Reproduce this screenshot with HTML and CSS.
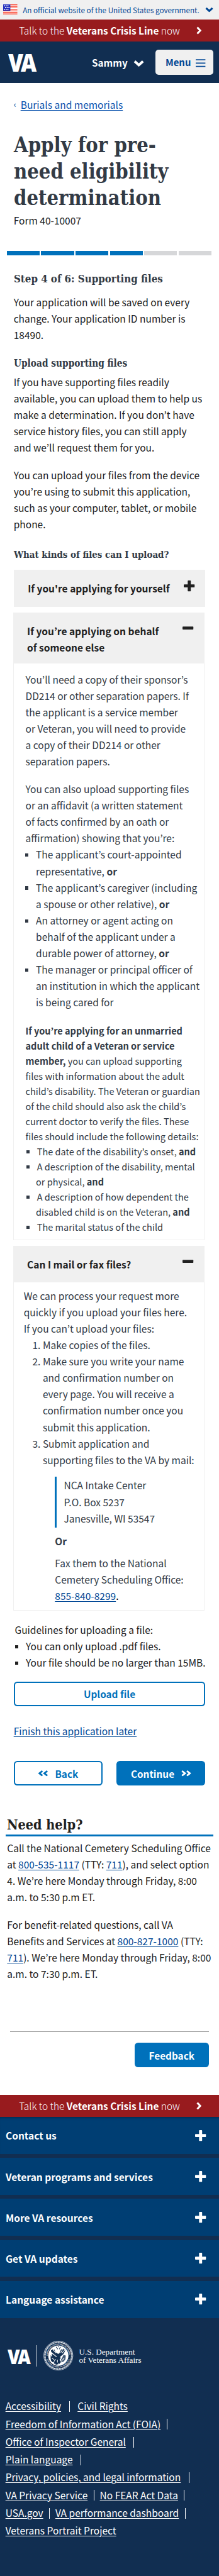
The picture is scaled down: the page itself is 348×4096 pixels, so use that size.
FILE: index.html
```html
<!DOCTYPE html>
<html lang="en">
<head>
<meta charset="utf-8">
<title>Apply for pre-need eligibility determination</title>
<link rel="stylesheet" href="styles.css">
</head>
<body>
<div class="gov">
  <svg class="flag" viewBox="0 0 22.6 16"><rect width="22.6" height="16" fill="#fff"/><path d="M0 .7h22.6M0 3.1h22.6M0 5.5h22.6M0 7.9h22.6M0 10.3h22.6M0 12.7h22.6M0 15.2h22.6" stroke="#f93822" stroke-width="1.2"/><rect width="11.4" height="10" fill="#2230bd"/><path d="M1.3 2.2h8M3 5.1h8M1.3 8h8" stroke="#fff" stroke-width="1.6" stroke-dasharray="1.7 1"/></svg>
  <span class="gov-text">An official website of the United States government.</span>
  <svg class="gov-chev"><use href="#chevron"/></svg>
</div>
<div class="crisis"><span>Talk to the <b>Veterans Crisis Line</b> now</span><svg><use href="#angle"/></svg></div>
<header class="header">
  <div class="va"><span>V</span><span>A</span></div>
  <div class="user">Sammy <svg><use href="#chevron"/></svg></div>
  <div class="menu">Menu <svg viewBox="0 0 15.4 12.6"><path d="M0 1h15.4M0 6.3h15.4M0 11.6h15.4" stroke="currentColor" stroke-width="1.7"/></svg></div>
</header>

<main class="main">
  <nav class="crumb"><span>‹</span><a>Burials and memorials</a></nav>
  <h1 class="slab">Apply for pre-<br>need eligibility<br>determination</h1>
  <p>Form 40-10007</p>
  <div class="progress"><i class="on"></i><i class="on"></i><i class="on"></i><i class="on"></i><i></i><i></i></div>
  <h2 class="slab">Step 4 of 6: Supporting files</h2>
  <p class="saved">Your application will be saved on every<br>change. Your application ID number is<br>18490.</p>
  <h3 class="slab upload-title">Upload supporting files</h3>
  <p class="upload-text">If you have supporting files readily<br>available, you can upload them to help us<br>make a determination. If you don’t have<br>service history files, you can still apply<br>and we’ll request them for you.</p>
  <p class="next">You can upload your files from the device<br>you’re using to submit this application,<br>such as your computer, tablet, or mobile<br>phone.</p>
  <h3 class="slab kinds">What kinds of files can I upload?</h3>

  <section class="acc">
    <div class="acc-head"><span>If you're applying for yourself</span><svg><use href="#plus"/></svg></div>
  </section>
  <section class="acc open">
    <div class="acc-head"><span>If you’re applying on behalf<br>of someone else</span><svg><use href="#minus"/></svg></div>
    <div class="acc-body behalf">
      <p>You’ll need a copy of their sponsor’s<br>DD214 or other separation papers. If<br>the applicant is a service member<br>or Veteran, you will need to provide<br>a copy of their DD214 or other<br>separation papers.</p>
      <p class="next">You can also upload supporting files<br>or an affidavit (a written statement<br>of facts confirmed by an oath or<br>affirmation) showing that you’re:</p>
      <ul>
        <li>The applicant’s court-appointed<br>representative, <b>or</b></li>
        <li>The applicant’s caregiver (including<br>a spouse or other relative), <b>or</b></li>
        <li>An attorney or agent acting on<br>behalf of the applicant under a<br>durable power of attorney, <b>or</b></li>
        <li>The manager or principal officer of<br>an institution in which the applicant<br>is being cared for</li>
      </ul>
      <div class="small">
        <p><b>If you’re applying for an unmarried<br>adult child of a Veteran or service<br>member,</b> you can upload supporting<br>files with information about the adult<br>child’s disability. The Veteran or guardian<br>of the child should also ask the child’s<br>current doctor to verify the files. These<br>files should include the following details:</p>
        <ul>
          <li>The date of the disability’s onset, <b>and</b></li>
          <li>A description of the disability, mental<br>or physical, <b>and</b></li>
          <li>A description of how dependent the<br>disabled child is on the Veteran, <b>and</b></li>
          <li>The marital status of the child</li>
        </ul>
      </div>
    </div>
  </section>
  <section class="acc open">
    <div class="acc-head"><span>Can I mail or fax files?</span><svg><use href="#minus"/></svg></div>
    <div class="acc-body mail">
      <p>We can process your request more<br>quickly if you upload your files here.<br>If you can’t upload your files:</p>
      <ol>
        <li><span>1.</span><div>Make copies of the files.</div></li>
        <li><span>2.</span><div>Make sure you write your name<br>and confirmation number on<br>every page. You will receive a<br>confirmation number once you<br>submit this application.</div></li>
        <li><span>3.</span><div>Submit application and<br>supporting files to the VA by mail:</div></li>
      </ol>
      <address>NCA Intake Center<br>P.O. Box 5237<br>Janesville, WI 53547</address>
      <p class="or"><b>Or</b></p>
      <p class="fax">Fax them to the National<br>Cemetery Scheduling Office:<br><a>855-840-8299</a><span>.</span></p>
    </div>
  </section>

  <div class="guide">
    <p>Guidelines for uploading a file:</p>
    <ul>
      <li>You can only upload .pdf files.</li>
      <li>Your file should be no larger than 15MB.</li>
    </ul>
  </div>
  <div class="btn outline upload">Upload file</div>
  <p class="finish"><a>Finish this application later</a></p>
  <div class="pair">
    <div class="btn outline back"><svg class="flip"><use href="#double"/></svg>Back</div>
    <div class="btn continue">Continue<svg><use href="#double"/></svg></div>
  </div>
</main>

<section class="help">
  <h2><span class="slab">Need help?</span></h2>
  <p>Call the National Cemetery Scheduling Office<br>at <a>800-535-1117</a> (TTY: <a>711</a>), and select option<br>4. We’re here Monday through Friday, 8:00<br>a.m. to 5:30 p.m ET.</p>
  <p class="next">For benefit-related questions, call VA<br>Benefits and Services at <a>800-827-1000</a> (TTY:<br><a>711</a>). We’re here Monday through Friday, 8:00<br>a.m. to 7:30 p.m. ET.</p>
</section>
<div class="feedback"><div class="btn">Feedback</div></div>

<div class="crisis bottom"><span>Talk to the <b>Veterans Crisis Line</b> now</span><svg><use href="#angle"/></svg></div>
<footer class="footer">
  <div class="rows">
    <div class="row">Contact us<svg><use href="#plus"/></svg></div>
    <div class="row">Veteran programs and services<svg><use href="#plus"/></svg></div>
    <div class="row">More VA resources<svg><use href="#plus"/></svg></div>
    <div class="row">Get VA updates<svg><use href="#plus"/></svg></div>
    <div class="row">Language assistance<svg><use href="#plus"/></svg></div>
  </div>
  <div class="brand">
    <div class="va va-small"><span>V</span><span>A</span></div>
    <i class="rule"></i>
    <svg class="seal" viewBox="0 0 100 100">
      <circle cx="50" cy="50" r="49" fill="none" stroke="#dfe5ec" stroke-width="1.6"/>
      <circle cx="50" cy="50" r="45" fill="none" stroke="#fff" stroke-width="4.6" stroke-dasharray="2.4 1.2"/>
      <path id="arcTop" d="M14 50a36 36 0 0 1 72 0" fill="none"/>
      <path id="arcBottom" d="M9.500 50a40.500 40.500 0 0 0 81 0" fill="none"/>
      <text class="seal-text"><textPath href="#arcTop" textLength="110">DEPARTMENT OF VETERANS AFFAIRS</textPath></text>
      <text class="seal-text"><textPath href="#arcBottom" startOffset="13" textLength="101">UNITED STATES OF AMERICA</textPath></text>
      <circle cx="50" cy="50" r="34" fill="#fff"/>
      <g fill="#112e51">
        <circle cx="44" cy="22" r="1.7"/><circle cx="50" cy="20" r="1.7"/><circle cx="56" cy="22" r="1.7"/><circle cx="47" cy="27" r="1.7"/><circle cx="54" cy="27" r="1.7"/>
        <path d="M25 31l4 1 2-4 3 4 4-3 1 6 5 6 5 3 4-1 4-9 3-6 3 3 4-5 2 5 4-2-1 7-5 9-11 9 2 5-4 5 4 8-4 6-3-3-2 5-4-1-3 4-2-6-5 1 3-8-8 2-5-6-1-9 5-5-1-8 6 2-8-8z"/>
        <path d="M67 47l8 3-1 12-6 8-10 3-1-7 6-9zM24 48l7 8 3 9 8 4-3 7-9-6-6-12z" opacity=".8"/>
      </g>
      <path d="M22 36l22 18M80 37L58 55M33 31l9 10M38 29l6 10M58 40l6-10M62 42l9-10M28 58l8 6M63 66l7-8M41 62l-6 8M56 62l5 8M47 64v9" stroke="#fff" stroke-width="2.2"/>
    </svg>
    <div class="dept"><div>U.S. Department</div><div>of Veterans Affairs</div></div>
  </div>
  <nav class="links">
    <div><a>Accessibility</a><i class="wide"></i><a>Civil Rights</a></div>
    <div><a>Freedom of Information Act (FOIA)</a><i></i></div>
    <div><a>Office of Inspector General</a><i class="wide"></i></div>
    <div><a>Plain language</a><i class="wide"></i></div>
    <div><a>Privacy, policies, and legal information</a><i class="wide"></i></div>
    <div><a>VA Privacy Service</a><i></i><a>No FEAR Act Data</a><i></i></div>
    <div><a>USA.gov</a><i></i><a>VA performance dashboard</a><i></i></div>
    <div><a>Veterans Portrait Project</a></div>
  </nav>
</footer>
<svg width="0" height="0" class="defs" aria-hidden="true">
  <symbol id="plus" viewBox="0 0 17.5 17.5"><rect x="0" y="6.3" width="17.5" height="4.8" rx="1"/><rect x="6.3" y="0" width="4.9" height="17.5" rx="1"/></symbol>
  <symbol id="minus" viewBox="0 0 17.5 17.5"><rect x="0" y="6.3" width="17.5" height="4.8" rx="1"/></symbol>
  <symbol id="chevron" viewBox="0 0 17.2 11"><path d="M2 2.4 8.6 8.4 15.2 2.4" fill="none" stroke="currentColor" stroke-width="4"/></symbol>
  <symbol id="angle" viewBox="0 0 8 13"><path d="M1.5 1.5 6.2 6.5 1.5 11.5" fill="none" stroke="currentColor" stroke-width="3"/></symbol>
  <symbol id="double" viewBox="0 0 15.4 9.4"><path d="M1.2 1 6 4.7 1.2 8.4M9 1 13.8 4.7 9 8.4" fill="none" stroke="currentColor" stroke-width="2.7"/></symbol>
</svg>
</body>
</html>
```
FILE: styles.css
```css
* { box-sizing: border-box; }
html, body { margin: 0; padding: 0; }
body {
  width: 348px; height: 4096px; overflow: hidden;
  display: flex; flex-direction: column;
  background: #fff; color: #212121;
  font: 15.53px/26.1px "Noto Sans CJK KR", "Noto Sans", sans-serif;
  white-space: nowrap;
}
body > * { flex: none; }
h1, h2, h3, p, ul, ol, address { margin: 0; padding: 0; font-style: normal; }
ul, ol { list-style: none; }
svg { display: block; flex: none; fill: currentColor; overflow: visible; }
.defs { position: absolute; }
a { color: #004795; text-decoration: underline; text-decoration-thickness: 1px; text-underline-offset: 2px; }
.slab { font-family: "DejaVu Serif", serif; font-weight: bold; color: #323a45; transform: scaleX(.865); transform-origin: left; }

/* wordmark: two tightly set capitals */
.va { display: flex; width: 51.7px; margin-right: -5.7px; font: 800 39px/53px "Open Sans", sans-serif; transform: scaleX(.89); transform-origin: left; }
.va span + span { margin-left: -4.5px; }
.va-small { width: 42px; margin-right: -4.7px; font-size: 31.8px; line-height: 43px; }
.va-small span + span { margin-left: -3.8px; }

.gov { height: 31.1px; background: #f0f0f0; border-bottom: 1px solid #fff; display: flex; align-items: center; padding: 0 8.7px 0 5.1px; color: #004795; }
.flag { width: 22.6px; height: 16px; }
.gov-text { margin-left: 8.5px; font-size: 11.7px; line-height: 29px; }
.gov-chev { width: 13.1px; height: 8.5px; margin-left: auto; }
.crisis { height: 34.7px; background: #981b1e; color: #fff; display: flex; align-items: center; padding: 0 28.5px 0 30.2px; font-size: 15.4px; font-weight: 300; line-height: 34.7px; }
.crisis b { font-weight: 700; }
.crisis svg { width: 8px; height: 13px; margin-left: auto; }
.header { height: 66.3px; background: #112e51; color: #fff; display: flex; align-items: center; padding: 0 8.7px 0 13.3px; font-weight: 700; font-size: 15.28px; }
.user { display: flex; align-items: center; margin-left: 86.7px; gap: 9.2px; }
.user svg { width: 17.2px; height: 11px; margin-top: 3px; }
.menu { display: flex; align-items: center; gap: 7.6px; margin-left: auto; width: 92.5px; height: 40.4px; padding-left: 16.2px; border-radius: 5px; background: #f0f0f0; color: #004795; font-size: 14.9px; }
.menu svg { width: 15.4px; height: 12.6px; margin-top: 2px; }

.main { padding: 21px 21.7px 0; }
.crumb { display: flex; }
.crumb span { width: 11px; color: #004795; font-size: 13px; }
.crumb a { color: #0b53ae; }
h1.slab { margin-top: 30.4px; font-size: 33.4px; line-height: 42.4px; transform: scaleX(.875); }
.progress { display: flex; gap: 2.4px; margin: 36.4px -10.8px 0; }
.progress i { width: 52.2px; height: 6.6px; background: #d6d7d9; }
.progress .on { background: #0071bb; }
h2.slab { margin-top: 24.2px; font-size: 17.4px; }
.saved { margin-top: 10.4px; }
h3.slab { font-size: 15.9px; }
.upload-title { margin-top: 20px; }
.upload-text { margin-top: 2.8px; }
.next { margin-top: 17.5px; }
h3.kinds { margin-top: 23.2px; font-size: 15.5px; }

.acc { margin-top: 11.1px; }
.acc-head { display: flex; justify-content: space-between; align-items: flex-start; background: #f0f0f0; padding: 16px 17.3px 12.4px 22.5px; min-height: 58.7px; font-weight: 700; }
.acc-head svg { width: 17.5px; height: 17.5px; margin-top: .2px; }
.open { margin: 8.9px 1.1px 0 -1.1px; }
.acc-body { border: 1px solid #f0f0f0; border-top: 0; color: #323a45; }
.behalf { padding: 12.4px 0 8.3px 18.9px; }
.behalf ul { margin-left: 16.6px; }
li::before { content: ""; display: inline-block; width: 5.2px; height: 5.2px; margin: 0 12.3px 3px -17.5px; background: currentColor; }
.small { margin-top: 20.9px; font-size: 14.52px; line-height: 23.95px; }
.small li::before { width: 4.7px; height: 4.7px; margin: 0 11.9px 2.8px -14.9px; }
.mail { padding: 7.3px 0 9.6px 16.1px; }
.mail li::before { display: none; }
.mail li { display: flex; padding-left: 13.8px; }
.mail li span { width: 16.4px; }
.mail address { margin: 14.7px 0 0 49px; height: 80.6px; padding-left: 11.8px; border-left: 3.3px solid #0071bb; }
.or { margin: 8.2px 0 0 49.6px; }
.fax { margin: 8.5px 0 0 49.6px; }
.fax span { color: #000; }

.guide { margin: 17px 0 0 1.8px; }
.guide ul { margin-left: 17.6px; }
.btn { display: flex; align-items: center; justify-content: center; height: 39.1px; border-radius: 5.4px; background: #0071bb; color: #fff; font-weight: 700; font-size: 15.35px; }
.outline { background: #fff; color: #0071bb; border: 2.2px solid #0071bb; }
.upload { margin-top: 17.8px; }
.finish { margin-top: 26px; }
.pair { display: flex; justify-content: space-between; margin-top: 35px; }
.pair .btn { width: 141.4px; height: 39.3px; }
.pair svg { width: 15.4px; height: 9.4px; margin-top: 1px; }
.back { gap: 11.5px; }
.continue { gap: 10.9px; }
.flip { transform: scaleX(-1); }

.help { padding: 0 9.4px; margin-top: 45.4px; }
.help h2 { border-bottom: 3.1px solid #0071bb; height: 35.5px; line-height: 30px; font-size: 21.8px; padding-left: 1.9px; }
.help h2 .slab { display: inline-block; color: #212121; transform: scaleX(.883); }
.help p { padding-left: 1.9px; }
.help h2 + p { margin-top: 4.8px; }
.feedback { margin: 78.5px 16.5px 0 16.2px; border-top: 1px solid #8d8d8d; padding-top: 17.6px; display: flex; justify-content: flex-end; }
.feedback .btn { width: 117.4px; }
.bottom { margin-top: 43.7px; height: 35px; line-height: 35px; }

.footer { flex: 1; background: #112e51; color: #fff; }
.rows { display: flex; flex-direction: column; gap: 6.5px; }
.row { height: 58.7px; background: #003e73; display: flex; align-items: center; justify-content: space-between; padding: 0 20.7px 0 9px; font-weight: 700; }
.row:first-child { box-shadow: inset 0 4px 4px -3px rgba(0,0,0,.35); }
.row svg { width: 17.5px; height: 17.5px; }
.brand { display: flex; align-items: center; margin: 36.9px 0 0 12px; height: 47.2px; }
.rule { width: 1px; height: 34px; background: #cfd5dc; margin-left: 8.8px; }
.seal { width: 47.4px; height: 47.2px; margin-left: 9.6px; }
.seal-text { font: bold 6.5px "Liberation Serif", serif; }
.dept { margin-left: 9.4px; font: 13.2px/13.1px "Liberation Serif", serif; }
.links { margin: 41.8px 0 0 8.7px; line-height: 28.25px; }
.links div { display: flex; align-items: center; }
.links a { color: #fff; }
.links i { width: 1px; height: 17px; margin: 2px 8.9px 0 9.4px; background: #fff; }
.links .wide { margin: 2px 12.6px 0 12.6px; }
```
